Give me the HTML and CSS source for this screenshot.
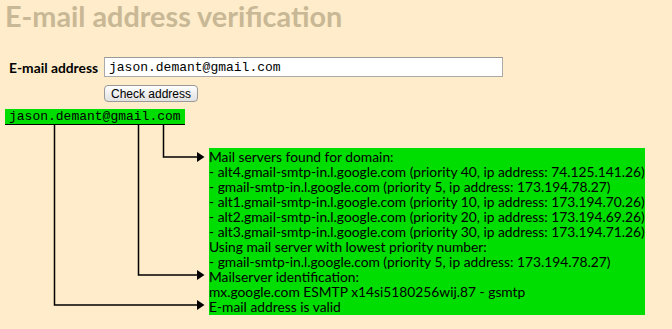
FILE: index.html
```html
<!DOCTYPE html>
<html lang="en">
<head>
  <meta charset="UTF-8" />
  <title>E-mail address verification</title>
  <link rel="stylesheet" href="styles.css">
</head>
<body>
  <h1>E-mail address verification</h1>
  <form class="check">
    <label for="email">E-mail address</label>
    <input type="text" id="email" value="jason.demant@gmail.com" />
    <button type="submit">Check address</button>
  </form>

  <div class="result">
    <div class="address">jason.demant@gmail.com</div>
    <svg class="links" width="210" height="200" viewBox="0 0 210 200">
      <g stroke="#000" stroke-width="1.5" fill="none">
        <polyline points="158.5,16 158.5,48 193,48" />
        <polyline points="133.5,16 133.5,166 193,166" />
        <polyline points="49.5,16 49.5,196 193,196" />
      </g>
      <g fill="#000">
        <polygon points="192,43 199.5,48 192,53" />
        <polygon points="192,161 199.5,166 192,171" />
        <polygon points="192,191 199.5,196 192,201" />
      </g>
    </svg>
    <div class="report">
      Mail servers found for domain:<br>
      - alt4.gmail-smtp-in.l.google.com (priority 40, ip address: 74.125.141.26)<br>
      - gmail-smtp-in.l.google.com (priority 5, ip address: 173.194.78.27)<br>
      - alt1.gmail-smtp-in.l.google.com (priority 10, ip address: 173.194.70.26)<br>
      - alt2.gmail-smtp-in.l.google.com (priority 20, ip address: 173.194.69.26)<br>
      - alt3.gmail-smtp-in.l.google.com (priority 30, ip address: 173.194.71.26)<br>
      Using mail server with lowest priority number:<br>
      - gmail-smtp-in.l.google.com (priority 5, ip address: 173.194.78.27)<br>
      Mailserver identification:<br>
      mx.google.com ESMTP x14si5180256wij.87 - gsmtp<br>
      E-mail address is valid
    </div>
  </div>
</body>
</html>
```

FILE: styles.css
```css
body {
  font-family: Lato, 'Liberation Sans', sans-serif;
  font-size: 13.8px;
  background: #feecca;
  margin: 0;
  padding: 0 5px;
  color: #000;
}
h1 {
  margin: 1px 0 0;
  font-size: 28.8px;
  line-height: 30px;
  color: #c8b896;
}
.check {
  display: grid;
  grid-template-columns: 99px 399px;
  row-gap: 8px;
  margin-top: 26px;
  align-items: center;
}
.check label {
  padding-left: 4px;
  font-weight: bold;
}
.check input {
  box-sizing: border-box;
  height: 20px;
  width: 399px;
  margin: 0;
  padding: 0 4px;
  border: 1px solid #aaa;
  border-top-color: #999;
  font-family: 'Liberation Mono', monospace;
  font-size: 13px;
}
.check button {
  grid-column: 2;
  justify-self: start;
  box-sizing: border-box;
  width: 94px;
  height: 17px;
  padding: 0;
  border: 1px solid #999;
  border-radius: 4px;
  background: linear-gradient(#fff, #ececec 60%, #e2e2e2);
  font-family: 'Liberation Sans', sans-serif;
  font-size: 12px;
  color: #000;
}
.result {
  position: relative;
  margin-top: 7px;
}
.address {
  width: fit-content;
  padding: 0 4px;
  line-height: 15px;
  background: #00dd00;
  border-bottom: 1px solid #000;
  font-family: 'Liberation Mono', monospace;
  font-size: 13px;
}
.links {
  position: absolute;
  left: 0;
  top: 0;
  overflow: visible;
}
.report {
  width: fit-content;
  margin: 23px 0 0 204px;
  padding: 1px 0;
  line-height: 15px;
  background: #00dd00;
  white-space: nowrap;
}
```
